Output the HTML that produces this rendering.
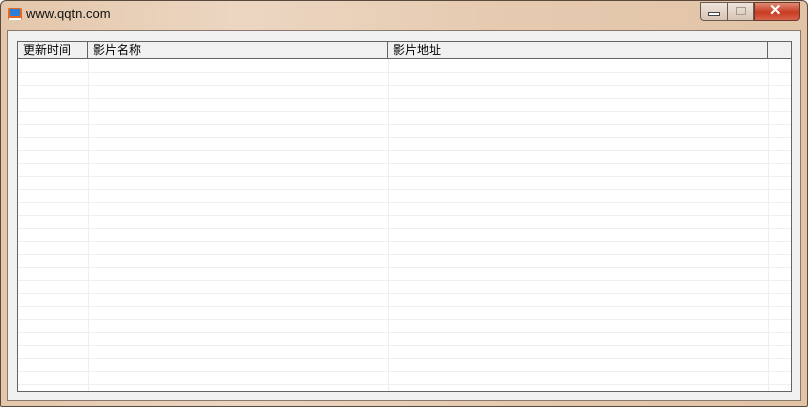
<!DOCTYPE html>
<html><head><meta charset="utf-8"><style>
*{margin:0;padding:0;box-sizing:border-box}
body{width:808px;height:407px;overflow:hidden;background:#fff;font-family:"Liberation Sans","Noto Sans CJK SC",sans-serif;position:relative}
.a{position:absolute}
</style></head><body>
<div class="a" style="left:0;top:0;width:808px;height:407px;background:linear-gradient(90deg,#e4c7ab,#ecd6c2 30%,#e6cbb1 60%,#e2c3a6);border:1px solid #5a4a3e;border-radius:6px 6px 2px 2px"></div>
<div class="a" style="left:26px;top:6px;font-size:13px;color:#111">www.qqtn.com</div>
<div class="a" style="left:8px;top:8px;width:14px;height:12px;background:#e8661e;border-radius:2px"></div>
<div class="a" style="left:10px;top:9px;width:10px;height:7px;background:#2a7fd8"></div>
<div class="a" style="left:9px;top:18px;width:12px;height:2px;background:#fff"></div>
<!-- caption buttons -->
<div class="a" style="left:700px;top:2px;width:28px;height:19px;background:linear-gradient(#efe5dc,#d6c4b4);border:1px solid #6b5a4d;border-radius:0 0 0 4px"></div>
<div class="a" style="left:708px;top:12px;width:12px;height:4px;background:#fff;border:1px solid #444"></div>
<div class="a" style="left:728px;top:2px;width:26px;height:19px;background:linear-gradient(#efe5dc,#d6c4b4);border:1px solid #6b5a4d;border-left:none"></div>
<div class="a" style="left:736px;top:7px;width:10px;height:8px;border:1px solid #a89a8e"></div>
<div class="a" style="left:754px;top:2px;width:46px;height:19px;background:linear-gradient(#e08a76,#c73c22 55%,#d8624a);border:1px solid #6b3a2d;border-radius:0 0 4px 0"></div>
<div class="a" style="left:769px;top:2px;font-size:15px;font-weight:bold;color:#fff;line-height:18px">✕</div>
<!-- client -->
<div class="a" style="left:7px;top:30px;width:794px;height:371px;background:#f0f0f0;border:1px solid #8a7a6e"></div>
<div class="a" style="left:17px;top:41px;width:775px;height:351px;background:#fff repeating-linear-gradient(#fff 0 12px,#efefef 12px 13px);background-position:0 18px;border:1px solid #646464"></div>
<div class="a" style="left:18px;top:42px;width:773px;height:17px;background:#f0f0f0;border-bottom:1px solid #646464"></div>
<div class="a" style="left:18px;top:59px;width:773px;height:1px;background:#fff"></div>
<div class="a" style="left:87px;top:42px;width:1px;height:16px;background:#646464"></div>
<div class="a" style="left:387px;top:42px;width:1px;height:16px;background:#646464"></div>
<div class="a" style="left:767px;top:42px;width:1px;height:16px;background:#646464"></div>
<div class="a" style="left:88px;top:59px;width:1px;height:332px;background:#efefef"></div>
<div class="a" style="left:388px;top:59px;width:1px;height:332px;background:#efefef"></div>
<div class="a" style="left:768px;top:59px;width:1px;height:332px;background:#efefef"></div>
<div class="a" style="left:23px;top:42px;font-size:12px;line-height:16px;color:#000">更新时间</div>
<div class="a" style="left:93px;top:42px;font-size:12px;line-height:16px;color:#000">影片名称</div>
<div class="a" style="left:393px;top:42px;font-size:12px;line-height:16px;color:#000">影片地址</div>
</body></html>
